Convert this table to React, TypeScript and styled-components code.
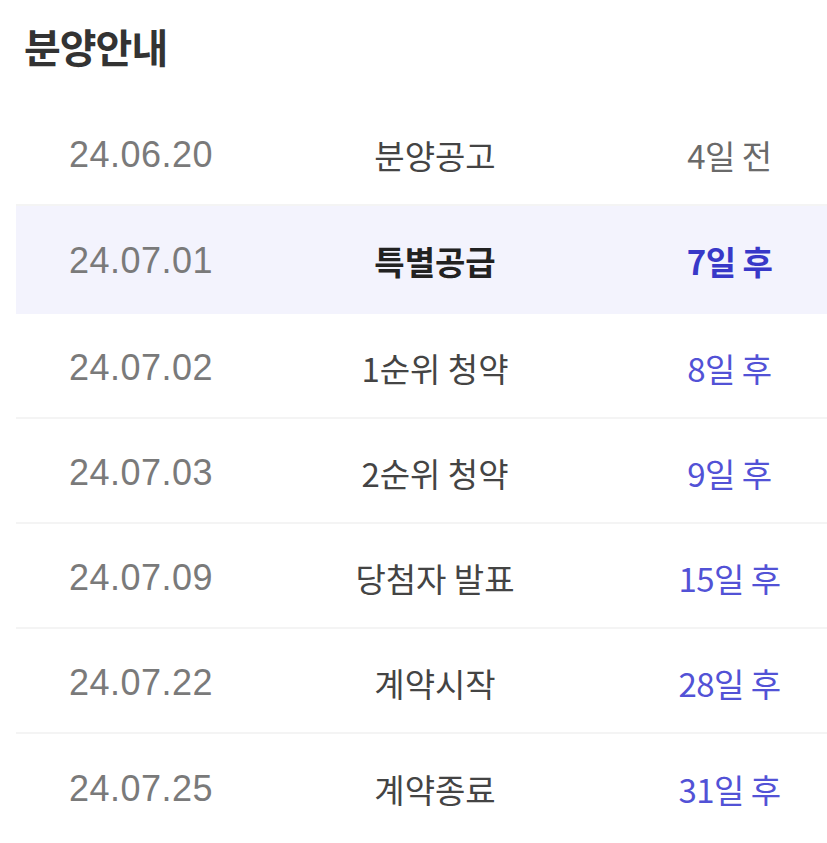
import * as React from "react";
import styled, { createGlobalStyle } from "styled-components";

interface Schedule {
  date: string;
  label: string;
  dday: string;
  past?: boolean;
  current?: boolean;
}

const schedules: Schedule[] = [
  { date: "24.06.20", label: "분양공고", dday: "4일 전", past: true },
  { date: "24.07.01", label: "특별공급", dday: "7일 후", current: true },
  { date: "24.07.02", label: "1순위 청약", dday: "8일 후" },
  { date: "24.07.03", label: "2순위 청약", dday: "9일 후" },
  { date: "24.07.09", label: "당첨자 발표", dday: "15일 후" },
  { date: "24.07.22", label: "계약시작", dday: "28일 후" },
  { date: "24.07.25", label: "계약종료", dday: "31일 후" },
];

export default function App() {
  return (
    <>
      <GlobalStyle />
      <Container>
        <Title>분양안내</Title>
        <List>
          {schedules.map((item, key) => (
            <Row key={key} current={item.current}>
              <DateCell>{item.date}</DateCell>
              <LabelCell current={item.current}>{item.label}</LabelCell>
              <DdayCell past={item.past} current={item.current}>
                {item.dday}
              </DdayCell>
            </Row>
          ))}
        </List>
      </Container>
    </>
  );
}

const GlobalStyle = createGlobalStyle`
  body {
    margin: 0;
    background: #fff;
    font-family: "Noto Sans CJK KR", "Noto Sans", sans-serif;
  }
`;

const Container = styled("div")`
  width: 827px;
  padding-left: 16px;
  box-sizing: border-box;
  overflow: hidden;
`;

const Title = styled("h2")`
  margin: 0;
  height: 101px;
  padding: 18px 0 0 8px;
  box-sizing: border-box;
  font-size: 40px;
  line-height: 56px;
  font-weight: 700;
  color: #333;
  letter-spacing: -1px;
`;

const List = styled("ul")`
  margin: 0;
  padding: 0;
  list-style: none;
`;

const Row = styled("li")<{ current?: boolean }>`
  display: grid;
  grid-template-columns: 250px 338px 1fr;
  align-items: center;
  height: ${p => (p.current ? "108px" : "105px")};
  padding-top: 4px;
  box-sizing: border-box;
  border-bottom: 2px solid ${p => (p.current ? "#f3f3fd" : "#f4f4f4")};
  background: ${p => (p.current ? "#f3f3fd" : "transparent")};

  &:last-child {
    border-bottom: none;
  }
`;

const DateCell = styled("span")`
  text-align: center;
  font-family: "Liberation Sans", Arial, sans-serif;
  font-size: 36px;
  letter-spacing: 0.5px;
  color: #7a7a7a;
`;

const LabelCell = styled("span")<{ current?: boolean }>`
  text-align: center;
  font-size: 33px;
  font-weight: ${p => (p.current ? 700 : 400)};
  color: ${p => (p.current ? "#222" : "#444")};
`;

const DdayCell = styled("span")<{ past?: boolean; current?: boolean }>`
  text-align: center;
  padding-left: 28px;
  font-size: 33px;
  font-weight: ${p => (p.current ? 700 : 400)};
  color: ${p => (p.past ? "#6a6a6a" : p.current ? "#3838c8" : "#5252d6")};
  letter-spacing: -0.5px;
`;
